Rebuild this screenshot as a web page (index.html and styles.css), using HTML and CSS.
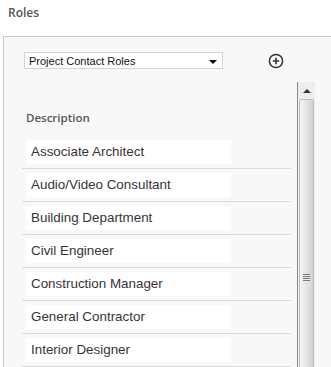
FILE: index.html
```html
<!DOCTYPE html>
<html lang="en">
<head>
    <meta charset="UTF-8">
    <meta name="viewport" content="width=device-width, initial-scale=1.0">
    <title>Roles</title>
    <link rel="stylesheet" href="styles.css">
</head>
<body>
    <!-- Title -->
    <div class="title">Roles</div>

    <!-- panel -->
    <div class="panel">
        <div class="toolbar">
            <div class="select">
                <span>Project Contact Roles</span>
                <span class="caret"></span>
            </div>
            <svg class="add" width="16" height="16" viewBox="0 0 16 16">
                <circle cx="8" cy="8" r="6.6" fill="none" stroke="#333" stroke-width="1.5"/>
                <path d="M8 4.8v6.4M4.8 8h6.4" stroke="#333" stroke-width="1.6"/>
            </svg>
        </div>

        <div class="grid">
            <div class="list">
                <div class="list-head">Description</div>
                <div class="row"><div class="cell">Associate Architect</div></div>
                <div class="row"><div class="cell">Audio/Video Consultant</div></div>
                <div class="row"><div class="cell">Building Department</div></div>
                <div class="row"><div class="cell">Civil Engineer</div></div>
                <div class="row"><div class="cell">Construction Manager</div></div>
                <div class="row"><div class="cell">General Contractor</div></div>
                <div class="row"><div class="cell">Interior Designer</div></div>
            </div>
            <div class="scrollbar">
                <div class="scroll-up"><span class="up-arrow"></span></div>
                <div class="thumb"><span class="grip"></span></div>
            </div>
        </div>
    </div>
</body>
</html>
```

FILE: styles.css
```css
body {
    margin: 0;
    padding: 0;
    background-color: #fff;
    font-family: "Open Sans", "Noto Sans", sans-serif;
    height: 367px;
    overflow: hidden;
}
.title {
    height: 36px;
    box-sizing: border-box;
    padding: 3px 0 0 8px;
    font-size: 12px;
    line-height: 20px;
    font-weight: 600;
    color: #555;
}
.panel {
    margin-left: 3px;
    border-top: 1px solid #c8c8c8;
    border-left: 1px solid #c8c8c8;
    background-color: #f8f8f8;
    padding-top: 15px;
    height: 315px;
    overflow: hidden;
}
.toolbar {
    display: flex;
    align-items: center;
    padding-left: 20px;
}
.select {
    width: 199px;
    height: 17px;
    box-sizing: border-box;
    border: 1px solid #d4d4d4;
    background-color: #fff;
    display: flex;
    align-items: center;
    justify-content: space-between;
    padding: 0 5px 0 4px;
    font-family: "Liberation Sans", Arial, sans-serif;
    font-size: 11px;
    color: #111;
}
.select .caret {
    width: 0;
    height: 0;
    border-left: 4px solid transparent;
    border-right: 4px solid transparent;
    border-top: 4px solid #000;
    margin-top: 2px;
}
.add {
    margin-left: 45px;
}
.grid {
    display: flex;
    margin-top: 13px;
}
.list {
    margin-left: 18px;
    width: 269px;
}
.list-head {
    height: 54px;
    box-sizing: border-box;
    padding: 28px 0 0 4px;
    font-size: 11.5px;
    line-height: 16px;
    font-weight: 600;
    color: #555;
}
.row {
    padding: 4px 0;
    border-bottom: 1px solid #dadada;
}
.cell {
    width: 205px;
    height: 24px;
    box-sizing: border-box;
    margin-left: 4px;
    padding-left: 5px;
    background-color: #fff;
    font-family: "Liberation Sans", Arial, sans-serif;
    font-size: 13.4px;
    line-height: 24px;
    color: #363338;
}
.scrollbar {
    margin-left: 6px;
    width: 18px;
    height: 300px;
    border-left: 1px solid #8a8a8a;
    box-sizing: border-box;
    background-color: #f1f1f1;
}
.scroll-up {
    height: 17px;
    display: flex;
    align-items: center;
    justify-content: center;
    background-color: #ededed;
}
.up-arrow {
    width: 0;
    height: 0;
    border-left: 4px solid transparent;
    border-right: 4px solid transparent;
    border-bottom: 4px solid #333;
}
.thumb {
    height: 360px;
    margin: 0 1px;
    border: 1px solid #bcbcbc;
    border-radius: 2px;
    background: linear-gradient(to right, #f6f6f6, #e8e8e8 40%, #d2d2d2);
    display: flex;
    justify-content: center;
    padding-top: 174px;
    box-sizing: border-box;
}
.grip {
    width: 7px;
    height: 8px;
    background: repeating-linear-gradient(to bottom, #777 0 1px, #eee 1px 2px);
}
```
